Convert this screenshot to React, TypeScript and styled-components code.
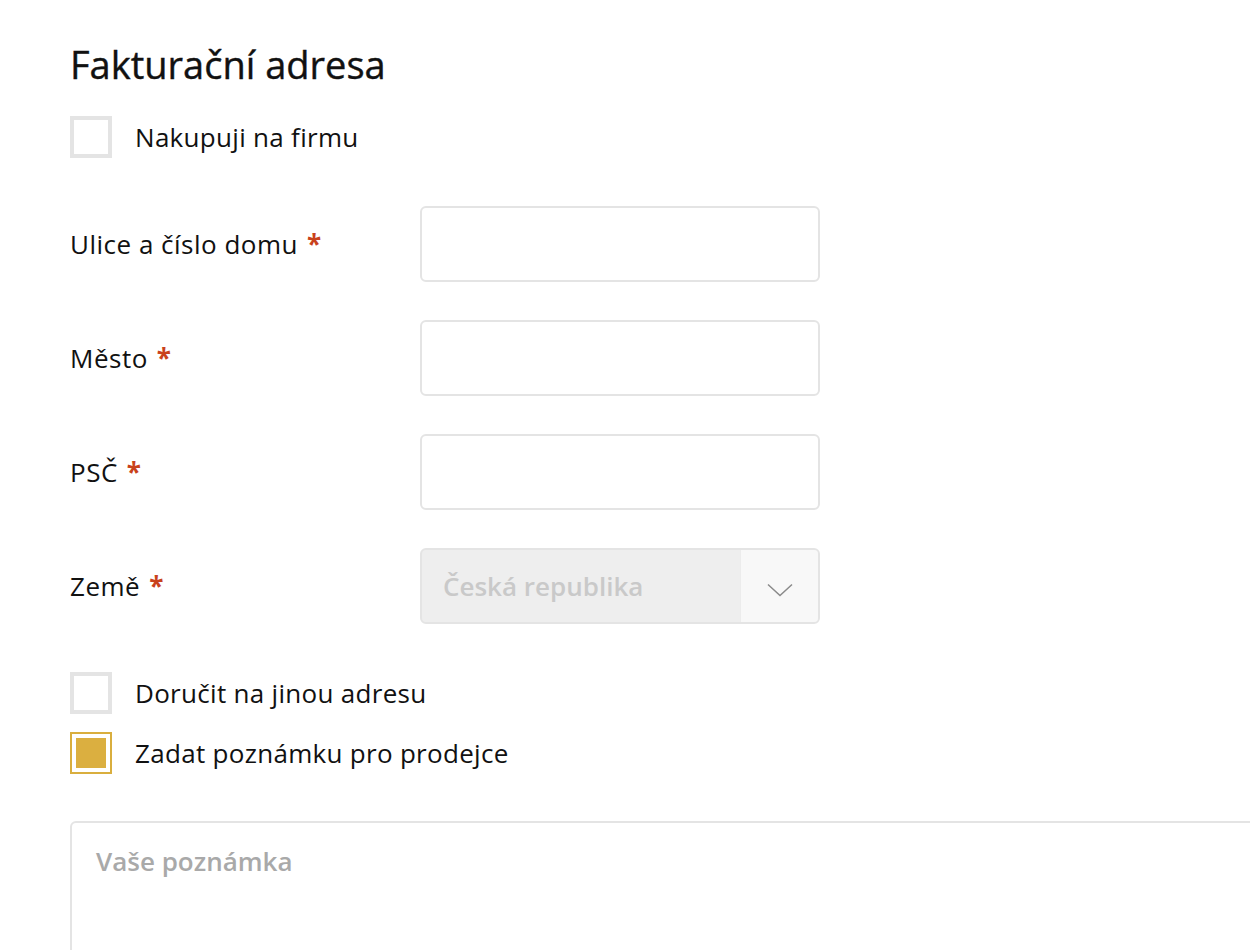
import React from "react";
import styled, { createGlobalStyle } from "styled-components";

const Global = createGlobalStyle`
  html, body { margin: 0; padding: 0; background: #fff; overflow: hidden; }
  body { font-family: "Open Sans", "Noto Sans", sans-serif; color: #111; }
`;

const Page = styled.div`
  width: 1250px;
  height: 950px;
  overflow: hidden;
  padding: 37px 0 0 70px;
  box-sizing: border-box;
`;

const Title = styled.h2`
  margin: 0 0 25px;
  font-size: 38px;
  font-weight: 500;
  line-height: 54px;
  color: #111;
  -webkit-text-stroke: 0.4px #111;
`;

const CheckRow = styled.label`
  display: flex;
  align-items: center;
  gap: 23px;
  height: 42px;
  font-size: 26px;
  font-weight: 500;
  letter-spacing: 0.3px;
  color: #111;
`;

const Box = styled.span<{ $checked?: boolean }>`
  width: 42px;
  height: 42px;
  box-sizing: border-box;
  border: ${(p) => (p.$checked ? "2px solid #d9ae3e" : "4px solid #e4e4e4")};
  padding: 4px;
  display: flex;
  flex-shrink: 0;
  &::after {
    content: "";
    flex: 1;
    background: ${(p) => (p.$checked ? "#dbaf40" : "transparent")};
  }
`;

const Fields = styled.div`
  display: flex;
  flex-direction: column;
  gap: 38px;
  margin: 48px 0 48px;
`;

const Row = styled.div`
  display: grid;
  grid-template-columns: 350px 400px;
  align-items: center;
`;

const Label = styled.span`
  font-size: 26px;
  font-weight: 500;
  letter-spacing: 0.5px;
  color: #111;
`;

const Star = styled.span`
  color: #c9421c;
  font-weight: 700;
  margin-left: 9px;
`;

const Input = styled.div`
  height: 76px;
  box-sizing: border-box;
  border: 2px solid #e4e4e4;
  border-radius: 6px;
  background: #fff;
`;

const Select = styled.div`
  height: 76px;
  box-sizing: border-box;
  border: 2px solid #e4e4e4;
  border-radius: 6px;
  background: #eeeeee;
  display: flex;
  overflow: hidden;
`;

const SelectText = styled.span`
  flex: 1;
  display: flex;
  align-items: center;
  padding-left: 21px;
  font-size: 26px;
  font-weight: 600;
  color: #c9c9c9;
`;

const SelectArrow = styled.span`
  width: 78px;
  background: #f8f8f8;
  border-left: 1px solid #ececec;
  display: flex;
  align-items: center;
  justify-content: center;
  padding-top: 8px;
  box-sizing: border-box;
`;

const Checks = styled.div`
  display: flex;
  flex-direction: column;
  gap: 18px;
`;

const Textarea = styled.div`
  margin-top: 47px;
  width: 1250px;
  height: 200px;
  box-sizing: border-box;
  border: 2px solid #e4e4e4;
  border-radius: 6px;
  padding: 20px 24px;
  font-size: 26px;
  font-weight: 600;
  color: #a9a9a9;
`;

const fields = ["Ulice a číslo domu", "Město", "PSČ"];

export default function App() {
  return (
    <>
      <Global />
      <Page>
        <Title>Fakturační adresa</Title>
        <CheckRow>
          <Box />
          Nakupuji na firmu
        </CheckRow>
        <Fields>
          {fields.map((f) => (
            <Row key={f}>
              <Label>
                {f}
                <Star>*</Star>
              </Label>
              <Input />
            </Row>
          ))}
          <Row>
            <Label>
              Země<Star>*</Star>
            </Label>
            <Select>
              <SelectText>Česká republika</SelectText>
              <SelectArrow>
                <svg width="26" height="14" viewBox="0 0 26 14" fill="none">
                  <path d="M1 1.5 L13 12.5 L25 1.5" stroke="#8a8a8a" strokeWidth="1.5" />
                </svg>
              </SelectArrow>
            </Select>
          </Row>
        </Fields>
        <Checks>
          <CheckRow>
            <Box />
            Doručit na jinou adresu
          </CheckRow>
          <CheckRow>
            <Box $checked />
            Zadat poznámku pro prodejce
          </CheckRow>
        </Checks>
        <Textarea>Vaše poznámka</Textarea>
      </Page>
    </>
  );
}
